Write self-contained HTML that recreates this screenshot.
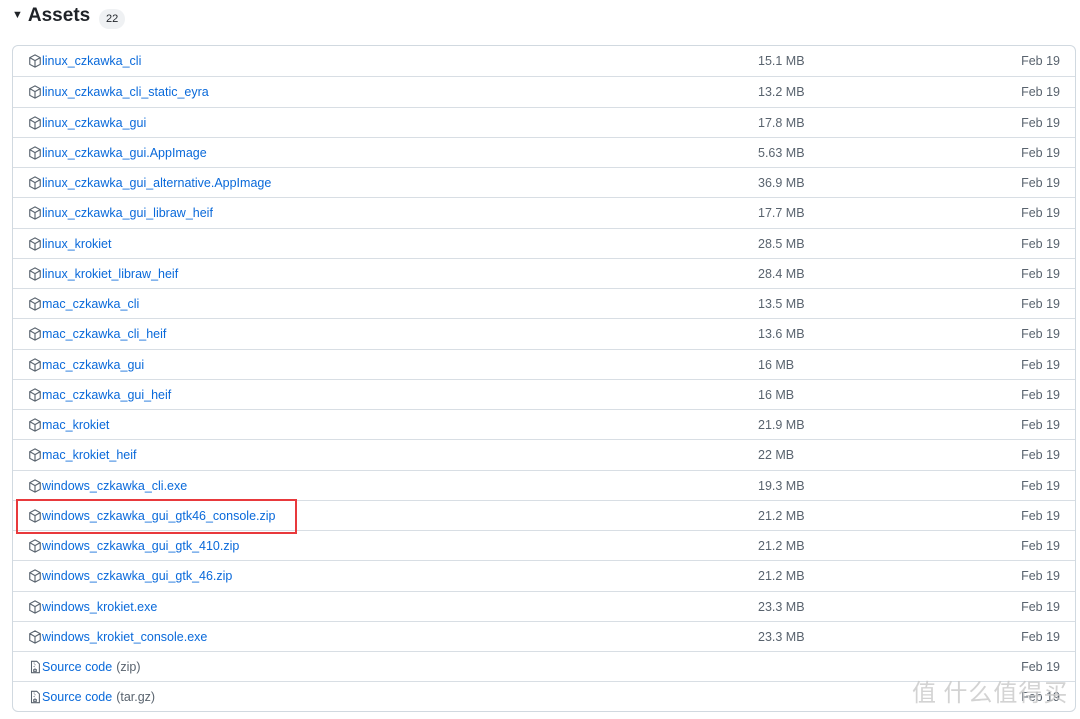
<!DOCTYPE html>
<html><head><meta charset="utf-8"><style>
body{margin:0;background:#fff;font-family:"Liberation Sans",Arial,sans-serif;width:1080px;height:719px;overflow:hidden;position:relative}
.h{position:absolute;left:12px;top:5px;font-size:19px;font-weight:bold;color:#1f2328;white-space:nowrap}
.h span.t{font-size:11px;position:relative;top:-3px;margin-right:5px}
.cnt{position:absolute;left:99px;top:9px;background:#eff1f3;border-radius:10px;font-size:11px;padding:4px 7px;color:#1f2328}
.tb{position:absolute;left:12px;top:45px;width:1062px;height:665px;border:1px solid #d1d9e0;border-radius:6px;overflow:hidden}
.r{height:30.25px;border-top:1px solid #d8dee4;box-sizing:border-box;position:relative;font-size:12.5px}
.r:first-child{border-top:none}
.n{position:absolute;left:15px;top:8px;color:#0969da;display:flex;align-items:center;white-space:nowrap}
.n svg{margin-right:0px}
.n .g{color:#59636e;margin-left:4px}
.s{position:absolute;left:745px;top:8px;color:#59636e}
.d{position:absolute;right:15px;top:8px;color:#59636e}
.box{position:absolute;left:16px;top:499px;width:281px;height:35px;border:2px solid #e8393c;box-sizing:border-box}
.wm{position:absolute;left:912px;top:676px;font-size:24px;color:rgba(200,200,200,.8);font-family:"Noto Sans CJK SC",sans-serif;letter-spacing:1px;white-space:nowrap;line-height:30px}
</style></head><body>
<div class="h"><span class="t">▼</span>Assets</div><div class="cnt">22</div>
<div class="tb">
<div class="r"><div class="n"><svg width="14" height="14" viewBox="0 0 16 16"><path d="M8 1l6 3.2v7.6L8 15l-6-3.2V4.2z M2 4.2l6 3.3 6-3.3 M8 7.5V15" fill="none" stroke="#59636e" stroke-width="1.3"/></svg>linux_czkawka_cli</div><div class="s">15.1 MB</div><div class="d">Feb 19</div></div>
<div class="r"><div class="n"><svg width="14" height="14" viewBox="0 0 16 16"><path d="M8 1l6 3.2v7.6L8 15l-6-3.2V4.2z M2 4.2l6 3.3 6-3.3 M8 7.5V15" fill="none" stroke="#59636e" stroke-width="1.3"/></svg>linux_czkawka_cli_static_eyra</div><div class="s">13.2 MB</div><div class="d">Feb 19</div></div>
<div class="r"><div class="n"><svg width="14" height="14" viewBox="0 0 16 16"><path d="M8 1l6 3.2v7.6L8 15l-6-3.2V4.2z M2 4.2l6 3.3 6-3.3 M8 7.5V15" fill="none" stroke="#59636e" stroke-width="1.3"/></svg>linux_czkawka_gui</div><div class="s">17.8 MB</div><div class="d">Feb 19</div></div>
<div class="r"><div class="n"><svg width="14" height="14" viewBox="0 0 16 16"><path d="M8 1l6 3.2v7.6L8 15l-6-3.2V4.2z M2 4.2l6 3.3 6-3.3 M8 7.5V15" fill="none" stroke="#59636e" stroke-width="1.3"/></svg>linux_czkawka_gui.AppImage</div><div class="s">5.63 MB</div><div class="d">Feb 19</div></div>
<div class="r"><div class="n"><svg width="14" height="14" viewBox="0 0 16 16"><path d="M8 1l6 3.2v7.6L8 15l-6-3.2V4.2z M2 4.2l6 3.3 6-3.3 M8 7.5V15" fill="none" stroke="#59636e" stroke-width="1.3"/></svg>linux_czkawka_gui_alternative.AppImage</div><div class="s">36.9 MB</div><div class="d">Feb 19</div></div>
<div class="r"><div class="n"><svg width="14" height="14" viewBox="0 0 16 16"><path d="M8 1l6 3.2v7.6L8 15l-6-3.2V4.2z M2 4.2l6 3.3 6-3.3 M8 7.5V15" fill="none" stroke="#59636e" stroke-width="1.3"/></svg>linux_czkawka_gui_libraw_heif</div><div class="s">17.7 MB</div><div class="d">Feb 19</div></div>
<div class="r"><div class="n"><svg width="14" height="14" viewBox="0 0 16 16"><path d="M8 1l6 3.2v7.6L8 15l-6-3.2V4.2z M2 4.2l6 3.3 6-3.3 M8 7.5V15" fill="none" stroke="#59636e" stroke-width="1.3"/></svg>linux_krokiet</div><div class="s">28.5 MB</div><div class="d">Feb 19</div></div>
<div class="r"><div class="n"><svg width="14" height="14" viewBox="0 0 16 16"><path d="M8 1l6 3.2v7.6L8 15l-6-3.2V4.2z M2 4.2l6 3.3 6-3.3 M8 7.5V15" fill="none" stroke="#59636e" stroke-width="1.3"/></svg>linux_krokiet_libraw_heif</div><div class="s">28.4 MB</div><div class="d">Feb 19</div></div>
<div class="r"><div class="n"><svg width="14" height="14" viewBox="0 0 16 16"><path d="M8 1l6 3.2v7.6L8 15l-6-3.2V4.2z M2 4.2l6 3.3 6-3.3 M8 7.5V15" fill="none" stroke="#59636e" stroke-width="1.3"/></svg>mac_czkawka_cli</div><div class="s">13.5 MB</div><div class="d">Feb 19</div></div>
<div class="r"><div class="n"><svg width="14" height="14" viewBox="0 0 16 16"><path d="M8 1l6 3.2v7.6L8 15l-6-3.2V4.2z M2 4.2l6 3.3 6-3.3 M8 7.5V15" fill="none" stroke="#59636e" stroke-width="1.3"/></svg>mac_czkawka_cli_heif</div><div class="s">13.6 MB</div><div class="d">Feb 19</div></div>
<div class="r"><div class="n"><svg width="14" height="14" viewBox="0 0 16 16"><path d="M8 1l6 3.2v7.6L8 15l-6-3.2V4.2z M2 4.2l6 3.3 6-3.3 M8 7.5V15" fill="none" stroke="#59636e" stroke-width="1.3"/></svg>mac_czkawka_gui</div><div class="s">16 MB</div><div class="d">Feb 19</div></div>
<div class="r"><div class="n"><svg width="14" height="14" viewBox="0 0 16 16"><path d="M8 1l6 3.2v7.6L8 15l-6-3.2V4.2z M2 4.2l6 3.3 6-3.3 M8 7.5V15" fill="none" stroke="#59636e" stroke-width="1.3"/></svg>mac_czkawka_gui_heif</div><div class="s">16 MB</div><div class="d">Feb 19</div></div>
<div class="r"><div class="n"><svg width="14" height="14" viewBox="0 0 16 16"><path d="M8 1l6 3.2v7.6L8 15l-6-3.2V4.2z M2 4.2l6 3.3 6-3.3 M8 7.5V15" fill="none" stroke="#59636e" stroke-width="1.3"/></svg>mac_krokiet</div><div class="s">21.9 MB</div><div class="d">Feb 19</div></div>
<div class="r"><div class="n"><svg width="14" height="14" viewBox="0 0 16 16"><path d="M8 1l6 3.2v7.6L8 15l-6-3.2V4.2z M2 4.2l6 3.3 6-3.3 M8 7.5V15" fill="none" stroke="#59636e" stroke-width="1.3"/></svg>mac_krokiet_heif</div><div class="s">22 MB</div><div class="d">Feb 19</div></div>
<div class="r"><div class="n"><svg width="14" height="14" viewBox="0 0 16 16"><path d="M8 1l6 3.2v7.6L8 15l-6-3.2V4.2z M2 4.2l6 3.3 6-3.3 M8 7.5V15" fill="none" stroke="#59636e" stroke-width="1.3"/></svg>windows_czkawka_cli.exe</div><div class="s">19.3 MB</div><div class="d">Feb 19</div></div>
<div class="r"><div class="n"><svg width="14" height="14" viewBox="0 0 16 16"><path d="M8 1l6 3.2v7.6L8 15l-6-3.2V4.2z M2 4.2l6 3.3 6-3.3 M8 7.5V15" fill="none" stroke="#59636e" stroke-width="1.3"/></svg>windows_czkawka_gui_gtk46_console.zip</div><div class="s">21.2 MB</div><div class="d">Feb 19</div></div>
<div class="r"><div class="n"><svg width="14" height="14" viewBox="0 0 16 16"><path d="M8 1l6 3.2v7.6L8 15l-6-3.2V4.2z M2 4.2l6 3.3 6-3.3 M8 7.5V15" fill="none" stroke="#59636e" stroke-width="1.3"/></svg>windows_czkawka_gui_gtk_410.zip</div><div class="s">21.2 MB</div><div class="d">Feb 19</div></div>
<div class="r"><div class="n"><svg width="14" height="14" viewBox="0 0 16 16"><path d="M8 1l6 3.2v7.6L8 15l-6-3.2V4.2z M2 4.2l6 3.3 6-3.3 M8 7.5V15" fill="none" stroke="#59636e" stroke-width="1.3"/></svg>windows_czkawka_gui_gtk_46.zip</div><div class="s">21.2 MB</div><div class="d">Feb 19</div></div>
<div class="r"><div class="n"><svg width="14" height="14" viewBox="0 0 16 16"><path d="M8 1l6 3.2v7.6L8 15l-6-3.2V4.2z M2 4.2l6 3.3 6-3.3 M8 7.5V15" fill="none" stroke="#59636e" stroke-width="1.3"/></svg>windows_krokiet.exe</div><div class="s">23.3 MB</div><div class="d">Feb 19</div></div>
<div class="r"><div class="n"><svg width="14" height="14" viewBox="0 0 16 16"><path d="M8 1l6 3.2v7.6L8 15l-6-3.2V4.2z M2 4.2l6 3.3 6-3.3 M8 7.5V15" fill="none" stroke="#59636e" stroke-width="1.3"/></svg>windows_krokiet_console.exe</div><div class="s">23.3 MB</div><div class="d">Feb 19</div></div>
<div class="r"><div class="n"><svg width="14" height="14" viewBox="0 0 16 16"><path d="M4 1.5h6l3 3V14.5H4z M7 3v1 M8 5v1 M7 7v1 M8 9v1 M6.5 11h3v2h-3z" fill="none" stroke="#59636e" stroke-width="1.2"/></svg>Source code <span class="g">(zip)</span></div><div class="d">Feb 19</div></div>
<div class="r"><div class="n"><svg width="14" height="14" viewBox="0 0 16 16"><path d="M4 1.5h6l3 3V14.5H4z M7 3v1 M8 5v1 M7 7v1 M8 9v1 M6.5 11h3v2h-3z" fill="none" stroke="#59636e" stroke-width="1.2"/></svg>Source code <span class="g">(tar.gz)</span></div><div class="d">Feb 19</div></div>
</div>
<div class="box"></div>
<div class="wm">值 什么值得买</div>
</body></html>
